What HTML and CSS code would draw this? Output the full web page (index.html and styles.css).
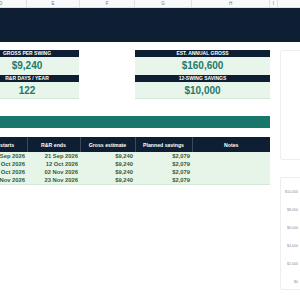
FILE: index.html
```html
<!DOCTYPE html>
<html>
<head>
<meta charset="utf-8">
<link rel="stylesheet" href="styles.css">
</head>
<body>
<div class="colhdr">
  <div class="ch">D</div><div class="ch">E</div><div class="ch">F</div><div class="ch">G</div><div class="ch">H</div><div class="ch">I</div><div class="ch"></div>
</div>
<div class="banner"></div>
<div class="content">
  <div class="main">
    <div class="kpis">
      <div class="kpi">
        <div class="kpi-label">GROSS PER SWING</div>
        <div class="kpi-value">$9,240</div>
        <div class="kpi-label">R&amp;R DAYS / YEAR</div>
        <div class="kpi-value last">122</div>
      </div>
      <div class="kpi">
        <div class="kpi-label">EST. ANNUAL GROSS</div>
        <div class="kpi-value">$160,600</div>
        <div class="kpi-label">12-SWING SAVINGS</div>
        <div class="kpi-value last">$10,000</div>
      </div>
    </div>
    <div class="section-bar"></div>
    <table class="sched">
      <colgroup><col class="c1"><col class="c2"><col class="c3"><col class="c4"><col class="c5"></colgroup>
      <thead>
        <tr><th>R&amp;R starts</th><th>R&amp;R ends</th><th>Gross estimate</th><th>Planned savings</th><th>Notes</th></tr>
      </thead>
      <tbody>
        <tr><td>15 Sep 2026</td><td>21 Sep 2026</td><td>$9,240</td><td>$2,079</td><td></td></tr>
        <tr><td>06 Oct 2026</td><td>12 Oct 2026</td><td>$9,240</td><td>$2,079</td><td></td></tr>
        <tr><td>27 Oct 2026</td><td>02 Nov 2026</td><td>$9,240</td><td>$2,079</td><td></td></tr>
        <tr><td>17 Nov 2026</td><td>23 Nov 2026</td><td>$9,240</td><td>$2,079</td><td></td></tr>
      </tbody>
    </table>
  </div>
  <div class="side">
    <div class="chart-card top"></div>
    <div class="chart-card axis">
      <div class="ylabels">
        <span>$10,000</span><span>$8,000</span><span>$6,000</span><span>$4,000</span><span>$2,000</span><span>$0</span>
      </div>
    </div>
  </div>
</div>
</body>
</html>
```
FILE: styles.css
```css
html, body {
  margin: 0;
  padding: 0;
  background: #ffffff;
  overflow: hidden;
  width: 300px;
  height: 300px;
  font-family: "Liberation Sans", Arial, sans-serif;
}

.colhdr {
  display: grid;
  grid-template-columns: 52px 53px 55px 57px 78px 8px 40px;
  margin-left: -25px;
  height: 7px;
  background: #f8f9fa;
  border-bottom: 1px solid #dfe2e5;
}
.ch {
  font-size: 4.5px;
  line-height: 7px;
  color: #6f747b;
  text-align: center;
  border-right: 1px solid #dfe2e5;
}

.banner {
  height: 34px;
  background: #0e1f33;
}

.content {
  display: flex;
  margin-left: -25px;
}
.main {
  width: 295px;
  flex: none;
  padding-top: 8px;
}

.kpis {
  display: flex;
  justify-content: space-between;
}
.kpi {
  width: 104px;
  background: #e8f5ea;
  border-bottom: 1px solid #d3e8d7;
}
.kpi + .kpi {
  width: 135px;
}
.kpi-label {
  height: 7px;
  line-height: 7.5px;
  background: #0e1f33;
  color: #ffffff;
  font-size: 5px;
  font-weight: 700;
  text-align: center;
}
.kpi-value {
  height: 18px;
  line-height: 18px;
  color: #1e7a6b;
  font-size: 10px;
  font-weight: 700;
  text-align: center;
}
.kpi-value.last {
  height: 16px;
  line-height: 17px;
}

.section-bar {
  margin-top: 17px;
  height: 12px;
  background: #17776b;
}

.sched {
  margin-top: 9px;
  width: 295px;
  border-collapse: collapse;
  table-layout: fixed;
}
.c1 { width: 52px; }
.c2 { width: 53px; }
.c3 { width: 55px; }
.c4 { width: 57px; }
.c5 { width: 78px; }
.sched th {
  height: 15px;
  padding: 0;
  background: #0e1f33;
  color: #ffffff;
  font-size: 5.2px;
  font-weight: 700;
  text-align: center;
  border-right: 1px solid #3a4a5e;
}
.sched th:last-child {
  border-right: none;
}
.sched td {
  height: 8px;
  padding: 0 2px 0 0;
  background: #e7f5e8;
  color: #2f5c3c;
  font-size: 5.8px;
  font-weight: 700;
  line-height: 8px;
  text-align: right;
}
.sched tbody tr:last-child td {
  border-bottom: 1px solid #d3e8d7;
}

.side {
  flex: none;
  width: 40px;
  margin-left: 10px;
  padding-top: 8px;
}
.chart-card {
  background: #ffffff;
  border: 1px solid #eceef0;
  border-radius: 2px;
  box-sizing: border-box;
}
.chart-card.top {
  height: 110px;
}
.chart-card.axis {
  margin-top: 17px;
  height: 113px;
  padding-top: 5px;
}
.ylabels {
  width: 17px;
  display: flex;
  flex-direction: column;
}
.ylabels span {
  height: 18px;
  line-height: 18px;
  font-size: 3.6px;
  color: #8a8f96;
  text-align: right;
}
```
